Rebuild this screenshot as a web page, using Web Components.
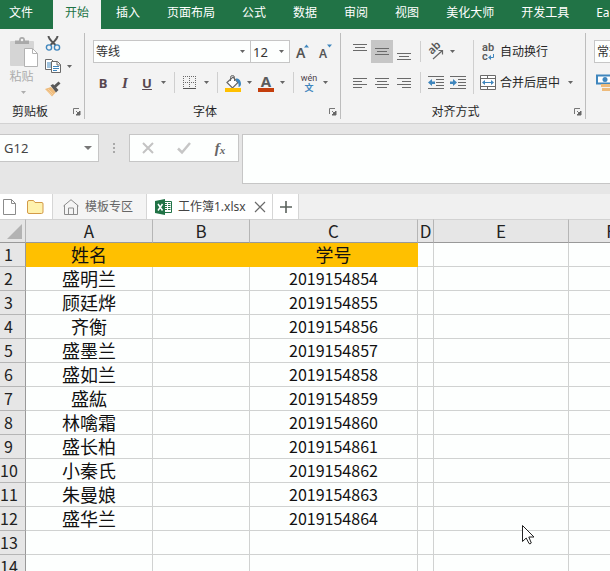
<!DOCTYPE html>
<html lang="zh-CN">
<head>
<meta charset="utf-8">
<title>工作簿1.xlsx</title>
<style>
  html, body { height: 100%; margin: 0; }
  body { overflow: hidden; font: 12px/16px "Noto Sans", "Noto Sans CJK SC", sans-serif; color: #262626; background: #fff; }
</style>
</head>
<body>
<excel-app></excel-app>

<template id="app">
  <style>
    :host { display: flex; flex-direction: column; height: 100vh; overflow: hidden; position: relative; background: #e6e6e6; }
    .ribbon { display: flex; background: #f3f3f3; border-bottom: 1px solid #d2d2d2; overflow: hidden; }
    .row { display: flex; align-items: center; height: 23px; }
    .rows { display: grid; gap: 8px; align-content: start; }
    .blocks { display: flex; }
    .clip { display: flex; padding-left: 5px; }
    .clip .paste { width: 37px; }
    .tools { display: grid; gap: 3px; align-content: start; }
    .tools .row { height: 20px; }
    .first { padding-left: 1px; }
    .size { margin-left: -1px; }
    .gap { margin-left: 2px; }
    .rest { flex: 1; }
    b, i, u { font: bold 13px/18px "Noto Sans", sans-serif; color: #57464f; }
    i { font: italic bold 15px/18px "Liberation Serif", serif; }
    sheet-grid { flex: 1; min-height: 0; }
    mouse-pointer { position: absolute; left: 522px; top: 525px; }
  </style>
  <ribbon-tabs></ribbon-tabs>
  <div class="ribbon">
    <ribbon-group label="剪贴板" style="--top:0px; --side:0px; --end:9px; --shift:9px">
      <div class="clip">
        <paste-button class="paste"></paste-button>
        <div class="tools">
          <div class="row"><tool-button label="剪切"><ui-icon name="cut"></ui-icon></tool-button></div>
          <div class="row"><tool-button label="复制"><ui-icon name="copy"></ui-icon></tool-button><caret-button label="复制选项"></caret-button></div>
          <div class="row"><tool-button label="格式刷"><ui-icon name="brush"></ui-icon></tool-button></div>
        </div>
      </div>
    </ribbon-group>
    <ribbon-group label="字体" style="--side:7px; --end:4px">
      <div class="rows">
        <div class="row first">
          <combo-box label="字体" value="等线" style="--w:158px"></combo-box>
          <combo-box class="size" label="字号" value="12" style="--w:40px; --f:13px"></combo-box>
          <tool-button class="gap" label="增大字号"><ui-icon name="grow"></ui-icon></tool-button>
          <tool-button label="减小字号"><ui-icon name="shrink"></ui-icon></tool-button>
        </div>
        <div class="row">
          <tool-button label="加粗"><b>B</b></tool-button>
          <tool-button label="倾斜"><i>I</i></tool-button>
          <tool-button label="下划线"><u>U</u></tool-button>
          <caret-button label="下划线选项"></caret-button>
          <tool-divider></tool-divider>
          <tool-button label="边框"><ui-icon name="border"></ui-icon></tool-button>
          <caret-button label="边框选项"></caret-button>
          <tool-divider></tool-divider>
          <tool-button label="填充颜色"><ui-icon name="fill"></ui-icon></tool-button>
          <caret-button label="填充选项"></caret-button>
          <tool-button label="字体颜色"><ui-icon name="fontcolor"></ui-icon></tool-button>
          <caret-button label="字体颜色选项"></caret-button>
          <tool-divider></tool-divider>
          <tool-button label="拼音"><ui-icon name="pinyin"></ui-icon></tool-button>
          <caret-button label="拼音选项"></caret-button>
        </div>
      </div>
    </ribbon-group>
    <ribbon-group label="对齐方式" style="--side:8px; --end:9px">
      <div class="blocks">
        <div class="rows">
          <div class="row">
            <tool-button label="顶端对齐"><ui-icon name="top"></ui-icon></tool-button>
            <tool-button label="垂直居中" active><ui-icon name="middle"></ui-icon></tool-button>
            <tool-button label="底端对齐"><ui-icon name="bottom"></ui-icon></tool-button>
            <tool-divider></tool-divider>
            <tool-button label="方向"><ui-icon name="rotate"></ui-icon></tool-button>
            <caret-button label="方向选项"></caret-button>
          </div>
          <div class="row">
            <tool-button label="左对齐"><ui-icon name="left"></ui-icon></tool-button>
            <tool-button label="居中"><ui-icon name="center"></ui-icon></tool-button>
            <tool-button label="右对齐"><ui-icon name="right"></ui-icon></tool-button>
            <tool-divider></tool-divider>
            <tool-button label="减少缩进"><ui-icon name="outdent"></ui-icon></tool-button>
            <tool-button label="增加缩进"><ui-icon name="indent"></ui-icon></tool-button>
          </div>
        </div>
        <tool-divider tall></tool-divider>
        <div class="rows">
          <div class="row"><text-button label="自动换行"><ui-icon name="wrap"></ui-icon></text-button></div>
          <div class="row"><text-button label="合并后居中"><ui-icon name="merge"></ui-icon></text-button><caret-button class="gap" label="合并选项"></caret-button></div>
        </div>
      </div>
    </ribbon-group>
    <ribbon-group class="rest" label="" style="--side:8px">
      <div class="rows">
        <div class="row"><combo-box label="数字格式" value="常规" style="--w:120px"></combo-box></div>
        <div class="row"><tool-button label="会计数字格式"><ui-icon name="money"></ui-icon></tool-button></div>
      </div>
    </ribbon-group>
  </div>
  <formula-bar></formula-bar>
  <book-tabs></book-tabs>
  <sheet-grid></sheet-grid>
  <mouse-pointer></mouse-pointer>
</template>

<script>
const G = '#6a6a6a', BL = '#3f86bd';
const lines = (list, c = G) => list.map(([x, y, w]) => `<path d="M${x} ${y + .5}h${w}" stroke="${c}"/>`).join('');
const ICONS = {
  cut: [16, 16, `<path d="M3.5 1c0 3 4 6 7 9M12.500 1c0 3-4 6-7 9" fill="none" stroke="#555" stroke-width="2"/><circle cx="4" cy="12.500" r="2.600" fill="none" stroke="${BL}" stroke-width="1.400"/><circle cx="12" cy="12.500" r="2.600" fill="none" stroke="${BL}" stroke-width="1.400"/>`],
  copy: [16, 16, `<path d="M.5 1.500h6l3 3v7h-9z" fill="#fff" stroke="${G}"/><path d="M2 5h4M2 7h4M2 9h4" stroke="${BL}"/><path d="M6.500 3.500h6l3 3v8h-9z" fill="#fff" stroke="${G}"/><path d="M12 3.500v3.500h3.500" fill="none" stroke="${G}"/><path d="M8 8.500h6M8 10.500h6M8 12.500h4" stroke="${BL}"/>`],
  brush: [16, 16, `<path d="M0 8l6-2 5 5-4 4.500z" fill="#eebb7c"/><path d="M1 9l6 5M3 8l5 5" stroke="#f7d9b0" stroke-width=".7"/><path d="M5.500 4.500L8 3l5.500 6-2.500 2.500z" fill="#595959"/><path d="M9.500 6L14.500 1.500" stroke="#595959" stroke-width="3"/>`],
  grow: [16, 18, `<text x="1" y="15" font-size="14" font-weight="600" fill="#555">A</text><path d="M9 4.500h5L11.500 1.500z" fill="${BL}"/>`],
  shrink: [16, 18, `<text x="2" y="15" font-size="12" font-weight="600" fill="#555">A</text><path d="M10 1.500h5L12.500 4.500z" fill="${BL}"/>`],
  border: [14, 14, `<path d="M0 .5h13M0 6.500h13M.5 0v12M6.500 0v12M12.500 0v12" stroke="${G}" stroke-dasharray="1 1" fill="none"/><path d="M0 12.500h13" stroke="#555"/>`],
  fill: [16, 18, `<path d="M2 8.500L8 3l5 5.500L7.500 14z" fill="#fff" stroke="#666" stroke-width="1.200"/><path d="M5.500 7V3.500a2 2 0 0 1 4 0V7" fill="none" stroke="#666"/><path d="M11 4.500c3 0 5 2 5 5.500 0 2-1.500 3-2.500 3 .6-3-.5-5.500-2.500-6.500z" fill="${BL}"/><path d="M0 14h16v4H0z" fill="#ffc000"/>`],
  fontcolor: [16, 18, `<text x="8" y="13" font-size="15" font-weight="700" text-anchor="middle" fill="#5b5b5b">A</text><path d="M0 14h16v4H0z" fill="#c43e0c"/>`],
  pinyin: [20, 18, `<text x="10" y="7" font-size="9" font-family="Roboto" text-anchor="middle" fill="#4d3f49">wén</text><text x="10" y="17" font-size="9" font-weight="700" text-anchor="middle" fill="${BL}">文</text>`],
  top: [14, 16, lines([[0,0,14],[2,3,10],[0,6,14]])],
  middle: [14, 16, lines([[0,4,14],[2,7,10],[0,10,14]])],
  bottom: [14, 16, lines([[0,9,14],[2,12,10],[0,15,14]])],
  left: [14, 12, lines([[0,1,14],[0,4,9],[0,7,14],[0,10,9]])],
  center: [14, 12, lines([[0,1,14],[2,4,10],[0,7,14],[2,10,10]])],
  right: [14, 12, lines([[0,1,14],[5,4,9],[0,7,14],[5,10,9]])],
  rotate: [16, 18, `<text transform="translate(4 12) rotate(-45)" font-size="11" font-weight="600" fill="#555">ab</text><path d="M5 16L14.500 7.500M10.500 7.500h4v4" stroke="#666" stroke-width="1.200" fill="none"/>`],
  outdent: [16, 14, lines([[0,0,16],[8,3,8],[8,6,8],[8,9,8],[0,12,16]]) + `<path d="M0 6.500L4 3v2.500h3v2.500H4V10z" fill="${BL}"/>`],
  indent: [16, 14, lines([[0,0,16],[8,3,8],[8,6,8],[8,9,8],[0,12,16]]) + `<path d="M7 6.500L3 3v2.500H0v2.500h3V10z" fill="${BL}"/>`],
  wrap: [16, 18, `<g font-family="Roboto" font-size="11" font-weight="600" fill="#5b5b5b"><text x="2" y="8">ab</text><text x="2" y="17">c</text></g><path d="M13.500 11v3.500H10" fill="none" stroke="${BL}"/><path d="M8 14.500l3-2.500v5z" fill="${BL}"/>`],
  merge: [16, 16, `<path d="M.5.5h15v14h-15zM.5 3.500h15M.5 11.500h15M7.500.5v3M7.500 11.500v3" fill="#fff" stroke="${G}"/><path d="M3 7.500h10" stroke="${BL}"/><path d="M2 7.500l3-2.500v5zM14 7.500l-3-2.500v5z" fill="${BL}"/>`],
  money: [18, 18, `<path d="M1 1.500h16v8H1z" fill="#fff" stroke="${BL}" stroke-width="2"/><circle cx="9" cy="5.500" r="2.500" fill="${BL}"/><path d="M5 10h12v3H5zM6 14h10v3H6z" fill="#eebb7c"/>`],
  paste: [28, 31, `<rect y="4" width="24" height="25" rx="1" fill="#d5d5d5"/><path d="M5 7V3.500h4C9 1 10 0 12 0s3 1 3 3.500h4V7z" fill="#a9a9a9"/><circle cx="12" cy="3" r="1.300" fill="#f3f3f3"/><path d="M14.500 11.500h8l5 5v13h-13z" fill="#fff" stroke="#b2b2b2"/><path d="M22.500 11.500v5h5" fill="none" stroke="#b2b2b2"/>`],
  launch: [8, 8, `<path d="M.5 6V.5H6" fill="none" stroke="#777"/><path d="M3 3l3 3" stroke="#777"/><path d="M7 3v4H3z" fill="#666" stroke="#666"/>`],
  caret: [5, 3, `<path d="M0 0h5L2.500 3z" fill="currentColor"/>`],
  bigcaret: [8, 4, `<path d="M0 0h8L4 4z" fill="currentColor"/>`],
  dots: [3, 11, `<path d="M0 0h2v2H0zM0 4h2v2H0zM0 8h2v2H0z" fill="#a9a9a9"/>`],
  cancel: [12, 12, `<path d="M1 1l10 10M11 1L1 11" stroke="#c3c3c3" stroke-width="2"/>`],
  check: [14, 12, `<path d="M1 6.500L5 10.500 13 1" stroke="#c6c6c6" stroke-width="2.500" fill="none"/>`],
  file: [13, 16, `<path d="M.5.5h8l4 4v11H.5z" fill="#fff" stroke="#8b8b8b"/><path d="M8.500.5v4h4" fill="none" stroke="#8b8b8b"/>`],
  folder: [17, 14, `<path d="M.5 12V2Q.5.5 2 .5h4.500l1.500 2h7q1 0 1 1.500v8q0 1.500-1.500 1.500H2Q.5 13.500.5 12z" fill="#fff2ae" stroke="#d39a48"/>`],
  home: [16, 16, `<path d="M1.500 6v9.500h13V6M.5 7L8 .7 15.500 7M5.500 15.500V9h5v6.500" fill="none" stroke="#8b8b8b"/>`],
  excel: [17, 16, `<path d="M8.500 2.500h8v11h-8z" fill="#fff" stroke="#217346"/><path d="M10 4.500h2M13 4.500h2.500M10 6.500h2M13 6.500h2.500M10 8.500h2M13 8.500h2.500M10 10.500h2M13 10.500h2.500" stroke="#217346"/><path d="M0 2L10 0v16L0 14z" fill="#217346"/><path d="M3 5l4.500 6.500M7.500 5L3 11.500" stroke="#fff" stroke-width="1.500"/>`],
  close: [12, 12, `<path d="M1 1l10 10M11 1L1 11" stroke="#6a6a6a" stroke-width="1.200"/>`],
  plus: [12, 12, `<path d="M6 0v12M0 6h12" stroke="#5a615c" stroke-width="1.600"/>`],
  corner: [15, 15, `<path d="M15 0v15H0z" fill="#b3b3b3"/>`],
  pointer: [13, 20, `<path d="M.5.5v16l3.700-3.500 2.800 5.500q1 1 2.300-.5L6.800 12h5.200z" fill="#fff" stroke="#222"/>`]
};
const icon = name => { const [w, h, body] = ICONS[name]; return `<svg width="${w}" height="${h}" viewBox="0 0 ${w} ${h}" aria-hidden="true" style="display:block;flex:none;overflow:visible;font-family:'Noto Sans','Noto Sans CJK SC',sans-serif">${body}</svg>`; };

const RESET = `button{all:unset;box-sizing:border-box;display:flex;align-items:center;justify-content:center;cursor:default}`;
const define = (tag, render) => customElements.define(tag, class extends HTMLElement {
  constructor() { super(); this.attachShadow({ mode: 'open' }); }
  connectedCallback() { this.shadowRoot.innerHTML = render(this); }
});

define('ui-icon', el => `<style>:host{display:block;flex:none}</style>${icon(el.getAttribute('name'))}`);
define('mouse-pointer', () => `<style>:host{display:block;pointer-events:none}</style>${icon('pointer')}`);
define('tool-divider', () => `<style>:host{display:block;width:1px;height:21px;margin:0 4px 0 5px;background:#cfcfcf}:host([tall]){height:auto;margin:0 4px}</style>`);
define('tool-button', el => `<style>:host{display:block;flex:none;align-self:stretch}${RESET}button{width:22px;height:100%}:host([active]) button{background:#c6c6c6}</style>
  <button aria-label="${el.getAttribute('label')}"><slot></slot></button>`);
define('text-button', el => `<style>:host{display:block;white-space:nowrap}${RESET}button{height:23px;gap:4px;padding:0 3px 0 2px}</style>
  <button><slot></slot>${el.getAttribute('label')}</button>`);
define('caret-button', el => `<style>:host{display:block;flex:none;align-self:stretch;color:#666}${RESET}button{width:11px;height:100%}</style>
  <button aria-label="${el.getAttribute('label')}">${icon('caret')}</button>`);
define('paste-button', () => `<style>:host{display:block;color:#adadad}${RESET}button{flex-direction:column;width:100%;padding-top:4px}span{margin:1px 4px 6px 0}</style>
  <button>${icon('paste')}<span>粘贴</span>${icon('caret')}</button>`);
define('combo-box', el => `<style>:host{display:grid;width:var(--w);height:23px;box-sizing:border-box;border:1px solid #c6c6c6;background:#fdfffe;align-items:center}
  select{all:unset;grid-area:1/1;font-size:var(--f,12px);line-height:20px;padding-left:2px;color:#333}svg{grid-area:1/1;justify-self:end;margin-right:5px;color:#666;pointer-events:none}</style>
  <select aria-label="${el.getAttribute('label')}"><option>${el.getAttribute('value')}</option></select>${icon('caret')}`);
define('ribbon-group', el => `<style>:host{display:flex;flex:none;flex-direction:column;margin:4px 0;height:86px;border-right:1px solid #bdbdbd}
  .content{padding:var(--top,7px) var(--end,0) 0 var(--side)}footer{display:flex;margin-top:auto;height:14px;line-height:14px}
  span{flex:1;text-align:center;padding-right:var(--shift,0)}${RESET}button{width:15px}</style>
  <div class="content"><slot></slot></div><footer><span>${el.getAttribute('label')}</span>${el.getAttribute('label') ? `<button aria-label="${el.getAttribute('label')}设置">${icon('launch')}</button>` : ''}</footer>`);

define('ribbon-tabs', () => `<style>:host{display:block;background:#217346;color:#fff;overflow:hidden}nav{display:flex;gap:3px;height:29px}
  ${RESET}button{flex:none;padding:0 12px 3px}.file{padding:0 17px 3px 9px}.on{background:#f3f3f3;color:#217346;margin-right:1px}.on+button{margin-left:-1px}</style>
  <nav role="tablist">${['文件','开始','插入','页面布局','公式','数据','审阅','视图','美化大师','开发工具','Ea'].map((t, i) =>
    `<button role="tab" class="${i === 0 ? 'file' : i === 1 ? 'on' : ''}">${t}</button>`).join('')}</nav>`);

define('formula-bar', () => `<style>:host{display:flex;align-items:flex-start;padding:10px 0 10px;background:#e6e6e6}
  .name,.fn{box-sizing:border-box;height:28px;background:#fdfffe;border:1px solid #c6c6c6;display:flex;align-items:center}
  .name{width:99px;border-left:0}input{all:unset;flex:1;min-width:0;padding-left:4px;font-size:13px;line-height:20px;color:#444}
  .dots{align-self:flex-start;padding:9px 13px 0 14px}
  .fn{width:110px;margin-right:3px}${RESET}.fn button{flex:1;height:100%}.name button{width:20px;color:#777}
  i{font:italic bold 15px/20px "Liberation Serif",serif;color:#666}sub{font-size:11px;line-height:0;vertical-align:-1px}
  textarea{all:unset;box-sizing:border-box;flex:1;height:50px;background:#fdfffe;border:1px solid #c6c6c6;border-right:0}</style>
  <div class="name"><input aria-label="名称框" value="G12"><button aria-label="名称列表">${icon('bigcaret')}</button></div>
  <div class="dots">${icon('dots')}</div>
  <div class="fn"><button aria-label="取消">${icon('cancel')}</button><button aria-label="输入">${icon('check')}</button><button aria-label="插入函数"><i>f<sub>x</sub></i></button></div>
  <textarea aria-label="编辑栏"></textarea>`);

define('book-tabs', () => `<style>:host{display:flex;height:25px;background:#f0f0f0}
  ${RESET}.cell{display:flex;align-items:center;box-sizing:border-box;border-right:1px solid #d6d6d6;background:#fff}
  .files{width:53px;gap:11px;padding-left:3px}.home{width:94px;background:#f4f4f4;color:#666}.home button{gap:6px;padding-left:10px}
  .book{width:126px;gap:8px}.book .t{gap:6px;padding-left:8px;color:#444}.add{width:26px}.add button{flex:1}</style>
  <div class="cell files"><button aria-label="新建">${icon('file')}</button><button aria-label="打开">${icon('folder')}</button></div>
  <div class="cell home"><button>${icon('home')}模板专区</button></div>
  <div class="cell book"><button class="t">${icon('excel')}工作簿1.xlsx</button><button aria-label="关闭">${icon('close')}</button></div>
  <div class="cell add"><button aria-label="新标签">${icon('plus')}</button></div>`);

define('sheet-grid', () => {
  const names = ['盛明兰','顾廷烨','齐衡','盛墨兰','盛如兰','盛紘','林噙霜','盛长柏','小秦氏','朱曼娘','盛华兰'];
  const rows = Array.from({ length: 14 }, (_, i) => {
    const a = i ? names[i - 1] || '' : '姓名', c = i ? (names[i - 1] ? 2019154853 + i : '') : '学号';
    return `<tr${i ? '' : ' class="title"'}><th scope="row">${i + 1}</th><td>${a}</td><td></td><td class="${i ? 'num' : ''}">${c}</td><td></td><td></td><td></td></tr>`;
  }).join('');
  return `<style>:host{display:block;overflow:hidden;background:#fdfffe;color:#111}
  table{table-layout:fixed;width:654px;border-collapse:separate;border-spacing:0;font:18px/23px "Noto Sans CJK SC",sans-serif}
  th,td{box-sizing:border-box;padding:0;height:24px;text-align:center;white-space:nowrap;border:0 solid #d0d2d1;border-width:0 1px 1px 0;font-weight:400}
  th{background:#e6e6e6;border-color:#b5b5b5;color:#222}thead th{height:24px;line-height:22px;border-top:1px solid #d2d2d2;border-bottom-color:#999;font-size:17px}
  tbody th{font-size:16px;border-right-color:#999;padding-right:8px}.num{font-size:16px}
  .title td:nth-child(-n+4){background:#ffc000;border-color:#ffc000}
  svg{margin:0 0 0 7px}</style>
  <table><colgroup>${[26,127,97,168,16,135,85].map(w => `<col style="width:${w}px">`).join('')}</colgroup>
  <thead><tr><th>${icon('corner')}</th>${[...'ABCDEF'].map(c => `<th scope="col">${c}</th>`).join('')}</tr></thead><tbody>${rows}</tbody></table>`;
});

customElements.define('excel-app', class extends HTMLElement {
  constructor() { super(); this.attachShadow({ mode: 'open' }).append(document.getElementById('app').content.cloneNode(true)); }
});
</script>
</body>
</html>
